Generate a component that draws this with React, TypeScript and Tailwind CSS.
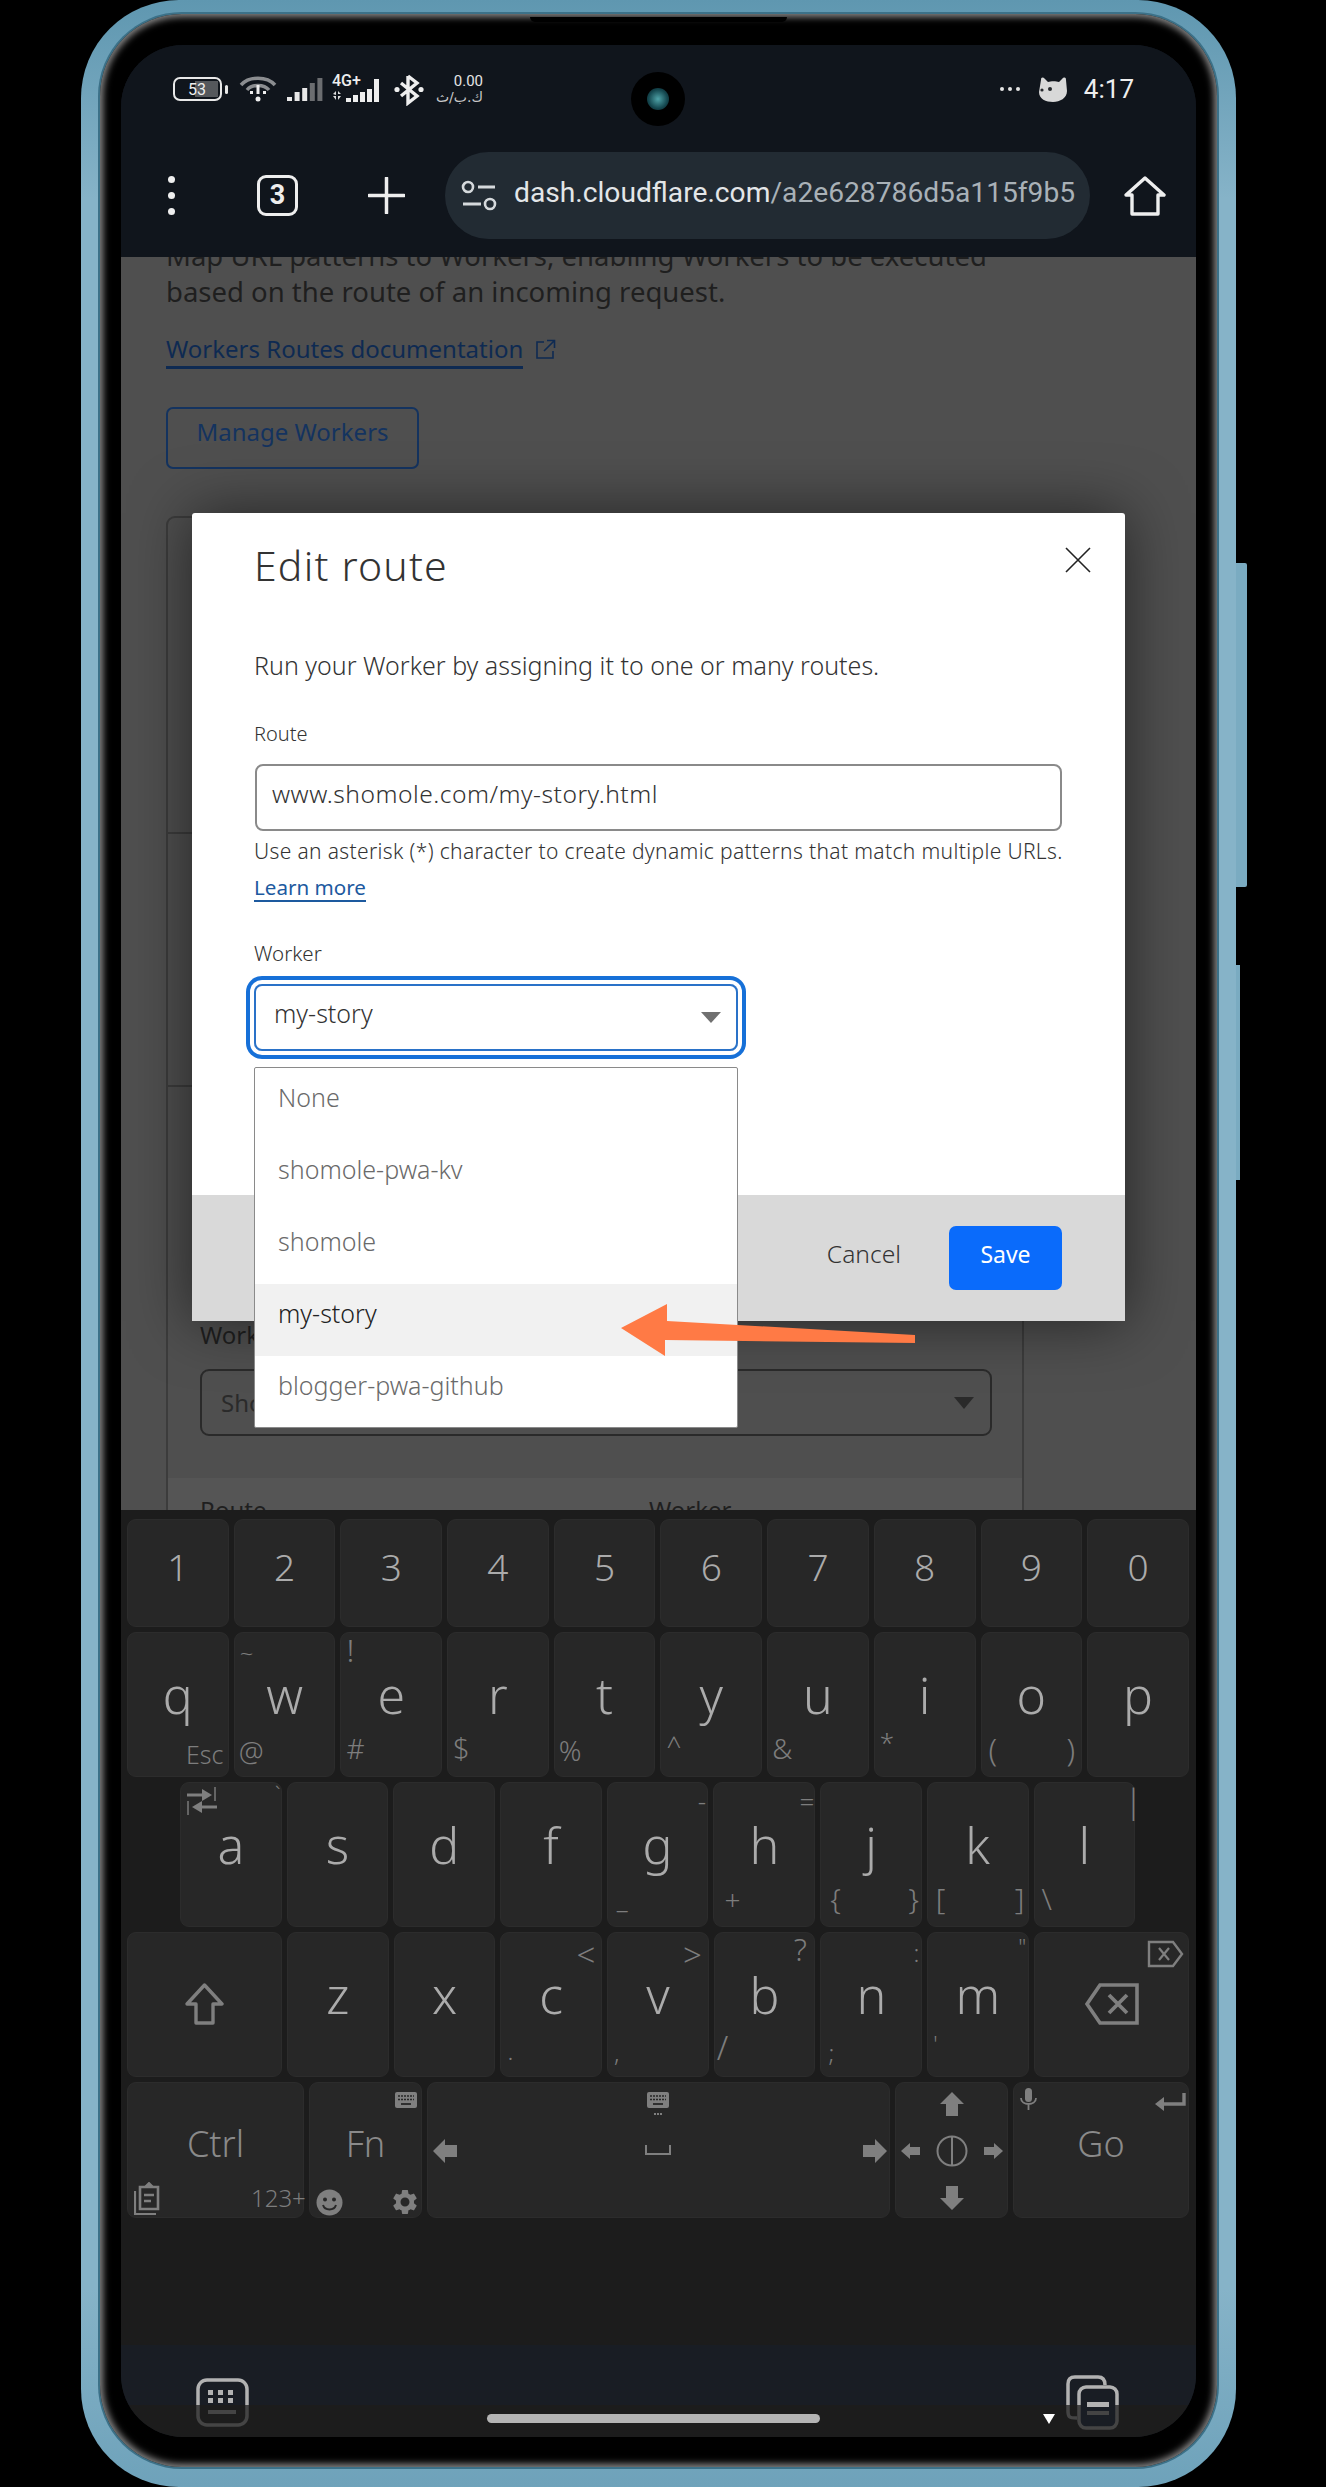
import React from 'react';

type HintT = { t: string; c: string };

function Hint({ t, c }: HintT) {
  return <span className={`absolute leading-none text-[#7d7d7d] font-light ${c}`}>{t}</span>;
}

function Key({
  label,
  w = 'w-[101.7px]',
  hints = [],
  children,
}: {
  label?: string;
  w?: string;
  hints?: HintT[];
  children?: React.ReactNode;
}) {
  return (
    <div className={`relative shrink-0 h-full bg-[#272727] border border-[#2c2c2c] rounded-[9px] flex justify-center ${w}`}>
      {label && <span className="text-[50px] leading-[66px] pt-[29px] text-[#ababab] font-light">{label}</span>}
      {hints.map((h, i) => (
        <Hint key={i} t={h.t} c={h.c} />
      ))}
      {children}
    </div>
  );
}

function Num({ n }: { n: string }) {
  return (
    <div className="shrink-0 h-full w-[101.7px] bg-[#272727] border border-[#2c2c2c] rounded-[9px] flex justify-center">
      <span className="text-[37px] leading-[50px] pt-[22px] text-[#ababab] font-light">{n}</span>
    </div>
  );
}

function Battery() {
  return (
    <svg width="56" height="24" viewBox="0 0 56 24">
      <rect x="1" y="1" width="47" height="22" rx="6" fill="none" stroke="#e8e8e8" strokeWidth="2" />
      <rect x="22" y="4" width="23" height="16" fill="#55585c" />
      <rect x="52" y="8" width="3" height="9" rx="1.5" fill="#e8e8e8" />
      <text x="24" y="18" textAnchor="middle" fontSize="16" fill="#eee" fontFamily="Roboto, sans-serif">53</text>
    </svg>
  );
}

function Wifi() {
  return (
    <svg width="38" height="26" viewBox="0 0 38 26" className="ml-[10px]">
      <path d="M2 9 C10 0 28 0 36 9" fill="none" stroke="#8b8d90" strokeWidth="3.5" />
      <path d="M8 14 C13 8 25 8 30 14" fill="none" stroke="#8b8d90" strokeWidth="3.5" />
      <rect x="17.5" y="9" width="3" height="9" fill="#eee" />
      <rect x="11" y="15" width="3" height="3" fill="#eee" />
      <rect x="24" y="15" width="3" height="3" fill="#eee" />
      <circle cx="19" cy="23" r="2.5" fill="#eee" />
    </svg>
  );
}

function Bars({ dim }: { dim: boolean }) {
  const hs = [4, 9, 13, 18, 23];
  return (
    <svg width="36" height="23" viewBox="0 0 36 23">
      {hs.map((h, i) => (
        <rect key={i} x={i * 7.6} y={23 - h} width="5" height={h} fill={dim && i > 2 ? '#6b6d70' : '#e8e8e8'} />
      ))}
    </svg>
  );
}

function StatusBar() {
  return (
    <div className="h-[88px] flex items-center pl-[52px] pr-[62px] font-['Roboto',sans-serif]">
      <Battery />
      <Wifi />
      <div className="ml-[10px] self-center mt-[1px]">
        <Bars dim />
      </div>
      <div className="ml-[9px] relative w-[50px] h-[26px]">
        <span className="absolute left-0 -top-[3px] text-[16px] leading-none text-[#eee] font-medium">4G+</span>
        <svg width="50" height="14" viewBox="0 0 50 14" className="absolute left-0 top-[12px] overflow-visible">
          <path d="M1 6 L4 3 V7 Z M1 8 L4 8 V12 Z M6 3 L9 6 H6 Z M6 8 H9 L6 12 Z" fill="#ddd" />
          <rect x="14" y="10" width="5" height="4" fill="#eee" />
          <rect x="21" y="7" width="5" height="7" fill="#eee" />
          <rect x="28" y="4" width="5" height="10" fill="#eee" />
          <rect x="35" y="1" width="5" height="13" fill="#eee" />
          <rect x="42" y="-9" width="5" height="23" fill="#eee" />
        </svg>
      </div>
      <svg width="30" height="33" viewBox="0 0 30 33" className="ml-[12px]">
        <path d="M14 3 V30 L23 23 L7 10 M14 3 L23 10 L7 23" fill="none" stroke="#eee" strokeWidth="3.4" />
        <circle cx="3" cy="16.5" r="2.6" fill="#eee" />
        <circle cx="27" cy="16.5" r="2.6" fill="#eee" />
      </svg>
      <div className="ml-[7px] w-[52px] flex flex-col items-end">
        <span className="text-[15px] leading-[15px] text-[#e4e4e4] mt-[1px]">0.00</span>
        <span dir="rtl" className="text-[14px] leading-[16px] text-[#c8c8c8] font-['DejaVu_Sans',sans-serif]">ك.ب/ث</span>
      </div>
      <div className="ml-auto flex items-center gap-[4px]">
        <span className="w-[4px] h-[4px] rounded-full bg-[#e4e4e4]" />
        <span className="w-[4px] h-[4px] rounded-full bg-[#e4e4e4]" />
        <span className="w-[4px] h-[4px] rounded-full bg-[#e4e4e4]" />
      </div>
      <svg width="30" height="26" viewBox="0 0 30 26" className="ml-[18px] mt-[2px]">
        <path d="M3 3 C3 0 5 0 7 2 L10 5 C13 4 18 4 21 5 L24 2 C26 0 28 0 28 3 L29 14 C29 21 22 25 15 25 C8 25 1 22 1 15 Z" fill="#d8d8d8" />
        <circle cx="12" cy="12" r="2" fill="#24272b" />
        <circle cx="4" cy="13" r="1.6" fill="#24272b" />
      </svg>
      <span className="ml-[16px] text-[26px] leading-none text-[#eee]">4:17</span>
    </div>
  );
}

function Toolbar() {
  return (
    <div className="pt-[19px] pb-[18px] flex items-center font-['Roboto',sans-serif]">
      <div className="ml-[47px] flex flex-col gap-[9px]">
        <span className="w-[7px] h-[7px] rounded-full bg-[#eee]" />
        <span className="w-[7px] h-[7px] rounded-full bg-[#eee]" />
        <span className="w-[7px] h-[7px] rounded-full bg-[#eee]" />
      </div>
      <div className="ml-[82px] w-[41px] h-[41px] rounded-[9px] border-[3.5px] border-[#eee] flex items-center justify-center text-[27px] font-bold text-[#eee] leading-none">
        3
      </div>
      <svg width="37" height="37" viewBox="0 0 37 37" className="ml-[70px]">
        <path d="M18.5 1 V36 M1 18.5 H36" stroke="#eee" strokeWidth="3.5" strokeLinecap="round" />
      </svg>
      <div className="ml-[40px] w-[645px] h-[87px] rounded-full bg-[#222b33] flex items-center pl-[16px] overflow-hidden">
        <svg width="36" height="32" viewBox="0 0 36 32" className="shrink-0">
          <circle cx="7" cy="7" r="5" fill="none" stroke="#d5d9dc" strokeWidth="2.6" />
          <path d="M17 7 H34 M2 24 H20" stroke="#d5d9dc" strokeWidth="2.8" />
          <circle cx="29" cy="24" r="5" fill="none" stroke="#d5d9dc" strokeWidth="2.6" />
        </svg>
        <span className="ml-[17px] -mt-[5px] text-[28.2px] leading-none whitespace-nowrap text-[#a9b1b7]">
          <span className="text-[#e3e6e8]">dash.cloudflare.com</span>/a2e628786d5a115f9b5
        </span>
      </div>
      <svg width="42" height="40" viewBox="0 0 42 40" className="ml-[34px]">
        <path d="M2 19 L21 2 L40 19 H34 V38 H8 V19 Z" fill="none" stroke="#eee" strokeWidth="3.4" strokeLinejoin="round" />
      </svg>
    </div>
  );
}

function PageBehind() {
  return (
    <div className="pl-[45px] -mt-[19px] text-[#1f1f1f]">
      <p className="text-[27.5px] leading-[36px] w-[870px]">
        Map URL patterns to Workers, enabling Workers to be executed based on the route of an incoming request.
      </p>
      <div className="mt-[22px] flex items-start">
        <span className="text-[24px] leading-[34px] text-[#0e2a52] border-b-[3px] border-[#0e2a52]">Workers Routes documentation</span>
        <svg width="21" height="21" viewBox="0 0 21 21" className="ml-[12px] mt-[7px]">
          <path d="M9 3 H2 V19 H18 V12 M12 1.5 H19.5 V9 M19 2 L9 12" fill="none" stroke="#0e2a52" strokeWidth="1.6" />
        </svg>
      </div>
      <div className="mt-[38px] w-[253px] h-[62px] rounded-[7px] border-2 border-[#14335f] text-[24px] leading-[46px] text-[#14335f] flex justify-center">
        Manage Workers
      </div>
      <div className="mt-[47px] w-[858px] rounded-t-[9px] border-x-2 border-t-2 border-[#3c3c3c]">
        <div className="h-[316px] border-b-2 border-[#3c3c3c]" />
        <div className="h-[253px] border-b-2 border-[#3c3c3c]" />
        <div className="h-[391px] px-[32px] pt-[232px]">
          <div className="text-[24px] leading-[32px] text-[#1f1f1f]">Worker</div>
          <div className="mt-[18px] h-[67px] w-[792px] rounded-[9px] border-2 border-[#2a2a2a] pl-[19px] pr-[16px] flex items-center justify-between">
            <span className="text-[24px] text-[#2a2a2a]">Shomole</span>
            <svg width="20" height="12" viewBox="0 0 20 12">
              <path d="M0 0 H20 L10 12 Z" fill="#2a2a2a" />
            </svg>
          </div>
        </div>
        <div className="h-[60px] bg-[#555555] pl-[32px] pt-[17px] flex text-[24px] leading-[30px] text-[#1f1f1f]">
          <span className="w-[449px]">Route</span>
          <span>Worker</span>
        </div>
      </div>
    </div>
  );
}

function Modal() {
  const items = ['None', 'shomole-pwa-kv', 'shomole', 'my-story', 'blogger-pwa-github'];
  return (
    <div className="absolute left-[71px] top-[256px] w-[933px] h-[808px] bg-white rounded-[3px] shadow-[0_0_60px_rgba(0,0,0,0.55)] flex flex-col text-[#333333]">
      <div className="relative h-[682px] pl-[62px] pr-[63px] pt-[28px]">
        <svg width="26" height="26" viewBox="0 0 26 26" className="absolute right-[34px] top-[34px]">
          <path d="M1 1 L25 25 M25 1 L1 25" stroke="#222" strokeWidth="1.6" />
        </svg>
        <h2 className="text-[41px] leading-[48px] font-light tracking-[1.2px]">Edit route</h2>
        <p className="mt-[60px] text-[25px] leading-[32px] font-light">Run your Worker by assigning it to one or many routes.</p>
        <label className="block mt-[40px] text-[20px] leading-[26px] font-light">Route</label>
        <div className="mt-[17px] ml-[1px] w-[807px] h-[67px] rounded-[8px] border-2 border-[#8a8a8a] flex items-center pl-[15px] text-[24.6px] font-light tracking-[0.5px] pb-[6px]">
          www.shomole.com/my-story.html
        </div>
        <p className="mt-[6px] text-[21px] leading-[28px] font-light tracking-[0.35px] whitespace-nowrap">
          Use an asterisk (*) character to create dynamic patterns that match multiple URLs.
        </p>
        <span className="inline-block mt-[9px] text-[20.6px] leading-[26px] text-[#1d5a9f] border-b-2 border-[#1d5a9f]">Learn more</span>
        <label className="block mt-[38px] text-[20.5px] leading-[26px] font-light">Worker</label>
        <div className="relative mt-[18px] w-[484px]">
          <div className="h-[67px] rounded-[8px] border-2 border-[#2a72c8] shadow-[0_0_0_4px_#ffffff,0_0_0_8px_#1670d8] flex items-center justify-between pl-[18px] pr-[15px]">
            <span className="text-[25px] font-light -mt-[8px]">my-story</span>
            <svg width="20" height="11" viewBox="0 0 20 11">
              <path d="M0 0 H20 L10 11 Z" fill="#707070" />
            </svg>
          </div>
          <div className="absolute left-0 top-[83px] w-[484px] h-[361px] bg-white border border-[#8a8a8a] rounded-[2px] z-10 flex flex-col">
            {items.map((it) => (
              <div
                key={it}
                className={`h-[72px] shrink-0 pl-[23px] pt-[9px] text-[25px] leading-[40px] font-light ${
                  it === 'my-story' ? 'bg-[#f1f1f1] text-[#222222]' : 'text-[#6a6a6a]'
                }`}
              >
                {it}
              </div>
            ))}
          </div>
        </div>
      </div>
      <div className="h-[126px] bg-[#d9d9d9] flex items-center justify-end pr-[63px]">
        <span className="text-[24.6px] font-light text-[#333] pb-[8px]">Cancel</span>
        <div className="ml-[48px] w-[113px] h-[64px] rounded-[7px] bg-[#0a6bfb] text-white text-[23px] flex items-center justify-center pb-[8px]">
          Save
        </div>
      </div>
    </div>
  );
}

function Arrow() {
  return (
    <svg width="294" height="52" viewBox="0 0 294 52" className="absolute left-[500px] top-[1047px] z-20">
      <path d="M0 24 L46 0 L46 17 L294 31 L294 39 L44 36 L44 52 Z" fill="#ff7a45" />
    </svg>
  );
}

const I = '#7f7f7f';

function Keyboard() {
  const r2 = [
    { l: 'q', h: [{ t: 'Esc', c: 'left-[58px] top-[109px] text-[25px]' }] },
    { l: 'w', h: [{ t: '~', c: 'left-[5px] top-[8px] text-[24px]' }, { t: '@', c: 'left-[4px] top-[104px] text-[28px]' }] },
    { l: 'e', h: [{ t: '!', c: 'left-[5px] top-[1px] text-[32px]' }, { t: '#', c: 'left-[5px] top-[101px] text-[28px]' }] },
    { l: 'r', h: [{ t: '$', c: 'left-[5px] top-[100px] text-[29px]' }] },
    { l: 't', h: [{ t: '%', c: 'left-[4px] top-[103px] text-[28px]' }] },
    { l: 'y', h: [{ t: '^', c: 'left-[5px] top-[99px] text-[26px]' }] },
    { l: 'u', h: [{ t: '&', c: 'left-[4px] top-[101px] text-[28px]' }] },
    { l: 'i', h: [{ t: '*', c: 'left-[5px] top-[96px] text-[26px]' }] },
    { l: 'o', h: [{ t: '(', c: 'left-[7px] top-[101px] text-[31px]' }, { t: ')', c: 'left-[85px] top-[101px] text-[31px]' }] },
    { l: 'p', h: [] },
  ];
  const r3 = [
    { l: 'a', h: [{ t: '`', c: 'left-[94px] top-[1px] text-[20px]' }] },
    { l: 's', h: [] },
    { l: 'd', h: [] },
    { l: 'f', h: [] },
    { l: 'g', h: [{ t: '-', c: 'left-[90px] top-[5px] text-[26px]' }, { t: '_', c: 'left-[9px] top-[103px] text-[26px]' }] },
    { l: 'h', h: [{ t: '=', c: 'left-[85px] top-[5px] text-[26px]' }, { t: '+', c: 'left-[10px] top-[102px] text-[28px]' }] },
    { l: 'j', h: [{ t: '{', c: 'left-[9px] top-[101px] text-[30px]' }, { t: '}', c: 'left-[87px] top-[101px] text-[30px]' }] },
    { l: 'k', h: [{ t: '[', c: 'left-[8px] top-[101px] text-[30px]' }, { t: ']', c: 'left-[87px] top-[101px] text-[30px]' }] },
    { l: 'l', h: [{ t: '|', c: 'left-[90px] top-[1px] text-[33px]' }, { t: '\\', c: 'left-[7px] top-[101px] text-[30px]' }] },
  ];
  const r4 = [
    { l: 'z', h: [] },
    { l: 'x', h: [] },
    { l: 'c', h: [{ t: '<', c: 'left-[75px] top-[5px] text-[33px]' }, { t: '.', c: 'left-[6px] top-[106px] text-[24px]' }] },
    { l: 'v', h: [{ t: '>', c: 'left-[75px] top-[5px] text-[33px]' }, { t: ',', c: 'left-[6px] top-[108px] text-[24px]' }] },
    { l: 'b', h: [{ t: '?', c: 'left-[79px] top-[1px] text-[31px]' }, { t: '/', c: 'left-[2px] top-[98px] text-[33px]' }] },
    { l: 'n', h: [{ t: ':', c: 'left-[92px] top-[8px] text-[24px]' }, { t: ';', c: 'left-[7px] top-[108px] text-[24px]' }] },
    { l: 'm', h: [{ t: '"', c: 'left-[90px] top-[2px] text-[22px]' }, { t: "'", c: 'left-[5px] top-[99px] text-[22px]' }] },
  ];
  return (
    <div className="h-[835px] bg-[#1c1c1c] pt-[9px] px-[6px] font-['Noto_Sans',sans-serif]">
      <div className="h-[108px] flex gap-[5px]">
        {['1', '2', '3', '4', '5', '6', '7', '8', '9', '0'].map((n) => (
          <Num key={n} n={n} />
        ))}
      </div>
      <div className="mt-[5px] h-[145px] flex gap-[5px]">
        {r2.map((k) => (
          <Key key={k.l} label={k.l} hints={k.h} />
        ))}
      </div>
      <div className="mt-[5px] h-[145px] pl-[53px] flex gap-[5px]">
        {r3.map((k) => (
          <Key key={k.l} label={k.l} hints={k.h}>
            {k.l === 'a' && (
              <svg width="30" height="28" viewBox="0 0 30 28" className="absolute left-[6px] top-[4px]">
                <path d="M0 8 H18" stroke={I} strokeWidth="3" />
                <path d="M15 2 L25 8 L15 14 Z" fill={I} />
                <path d="M30 20 H12" stroke={I} strokeWidth="3" />
                <path d="M15 14 L5 20 L15 26 Z" fill={I} />
                <path d="M28 0 V14 M1 14 V28" stroke={I} strokeWidth="1.4" />
              </svg>
            )}
          </Key>
        ))}
      </div>
      <div className="mt-[5px] h-[145px] flex gap-[5px]">
        <Key w="w-[155px]">
          <svg width="39" height="42" viewBox="0 0 39 42" className="absolute left-[57px] top-[50px]">
            <path d="M19.5 2 L37 21 H28 V40 H11 V21 H2 Z" fill="none" stroke={I} strokeWidth="3.4" strokeLinejoin="round" />
          </svg>
        </Key>
        {r4.map((k) => (
          <Key key={k.l} label={k.l} hints={k.h} />
        ))}
        <Key w="w-[155px]">
          <svg width="37" height="28" viewBox="0 0 37 28" className="absolute left-[112px] top-[7px]">
            <path d="M2 2 H26 L35 14 L26 26 H2 Z" fill="none" stroke={I} strokeWidth="2.4" />
            <path d="M12 8 L22 20 M22 8 L12 20" stroke={I} strokeWidth="2.2" />
          </svg>
          <svg width="54" height="42" viewBox="0 0 54 42" className="absolute left-[50px] top-[50px]">
            <path d="M52 2 H15 L2 21 L15 40 H52 Z" fill="none" stroke={I} strokeWidth="3.6" />
            <path d="M24 12 L42 30 M42 12 L24 30" stroke={I} strokeWidth="3.8" />
          </svg>
        </Key>
      </div>
      <div className="mt-[5px] h-[136px] flex gap-[5px]">
        <Key w="w-[177px]">
          <span className="text-[36px] leading-[46px] pt-[38px] text-[#8a8a8a] font-light">Ctrl</span>
          <svg width="30" height="33" viewBox="0 0 30 33" className="absolute left-[6px] top-[99px]">
            <path d="M6 5 H24 V27 H6 Z" fill="none" stroke={I} strokeWidth="2.6" />
            <path d="M1 9 V32 H22" fill="none" stroke={I} strokeWidth="2.2" />
            <path d="M11 5 L15 1 L19 5 Z" fill={I} stroke={I} strokeWidth="2" />
            <path d="M10 13 H20 M10 19 H17" stroke={I} strokeWidth="2.4" />
          </svg>
          <span className="absolute left-[123px] top-[103px] text-[24px] leading-none text-[#7d7d7d] font-light">123+</span>
        </Key>
        <Key w="w-[113px]">
          <span className="text-[36px] leading-[46px] pt-[38px] text-[#8a8a8a] font-light">Fn</span>
          <svg width="22" height="16" viewBox="0 0 22 16" className="absolute left-[85px] top-[9px]">
            <rect width="22" height="16" rx="2" fill={I} />
            <path d="M3 4 H19 M3 7.5 H19" stroke="#272727" strokeWidth="1.5" strokeDasharray="2 1" />
            <path d="M6 12 H16" stroke="#272727" strokeWidth="1.8" />
          </svg>
          <svg width="27" height="27" viewBox="0 0 27 27" className="absolute left-[6px] top-[106px]">
            <circle cx="13.5" cy="13.5" r="13" fill={I} />
            <circle cx="9" cy="10.5" r="2" fill="#272727" />
            <circle cx="18" cy="10.5" r="2" fill="#272727" />
            <path d="M7 16 C9 22 18 22 20 16" fill="none" stroke="#272727" strokeWidth="2" />
          </svg>
          <svg width="30" height="30" viewBox="0 0 24 24" className="absolute left-[80px] top-[104px]">
            <path
              fill={I}
              d="M19.14 12.94c.04-.3.06-.61.06-.94 0-.32-.02-.64-.07-.94l2.03-1.58a.49.49 0 0 0 .12-.61l-1.92-3.32a.49.49 0 0 0-.59-.22l-2.39.96c-.5-.38-1.03-.7-1.62-.94l-.36-2.54a.48.48 0 0 0-.48-.41h-3.84c-.24 0-.43.17-.47.41l-.36 2.54c-.59.24-1.13.57-1.62.94l-2.39-.96a.48.48 0 0 0-.59.22L2.74 8.87a.48.48 0 0 0 .12.61l2.03 1.58c-.05.3-.09.63-.09.94s.02.64.07.94l-2.03 1.58a.49.49 0 0 0-.12.61l1.92 3.32c.12.22.37.29.59.22l2.39-.96c.5.38 1.03.7 1.62.94l.36 2.54c.05.24.24.41.48.41h3.84c.24 0 .44-.17.47-.41l.36-2.54c.59-.24 1.13-.56 1.62-.94l2.39.96c.22.08.47 0 .59-.22l1.92-3.32a.48.48 0 0 0-.12-.61l-2.01-1.58zM12 15.6A3.6 3.6 0 1 1 12 8.4a3.6 3.6 0 0 1 0 7.2z"
            />
          </svg>
        </Key>
        <Key w="w-[463px]">
          <svg width="22" height="24" viewBox="0 0 22 24" className="absolute left-[219px] top-[9px]">
            <rect width="22" height="16" rx="2" fill={I} />
            <path d="M3 4 H19 M3 7.5 H19" stroke="#272727" strokeWidth="1.5" strokeDasharray="2 1" />
            <path d="M6 12 H16" stroke="#272727" strokeWidth="1.8" />
            <path d="M7 22 H15" stroke={I} strokeWidth="2" strokeDasharray="2 1" />
          </svg>
          <svg width="26" height="10" viewBox="0 0 26 10" className="absolute left-[217px] top-[62px]">
            <path d="M1 0 V9 H25 V0" fill="none" stroke={I} strokeWidth="2" />
          </svg>
          <svg width="24" height="24" viewBox="0 0 24 24" className="absolute left-[5px] top-[56px]">
            <path d="M0 12 L12 0 V6 H24 V18 H12 V24 Z" fill={I} />
          </svg>
          <svg width="24" height="24" viewBox="0 0 24 24" className="absolute left-[435px] top-[56px]">
            <path d="M24 12 L12 0 V6 H0 V18 H12 V24 Z" fill={I} />
          </svg>
        </Key>
        <Key w="w-[113px]">
          <svg width="24" height="24" viewBox="0 0 24 24" className="absolute left-[44px] top-[9px]">
            <path d="M12 0 L24 12 H18 V24 H6 V12 H0 Z" fill={I} />
          </svg>
          <svg width="24" height="24" viewBox="0 0 24 24" className="absolute left-[44px] top-[103px]">
            <path d="M12 24 L24 12 H18 V0 H6 V12 H0 Z" fill={I} />
          </svg>
          <svg width="19" height="16" viewBox="0 0 19 16" className="absolute left-[5px] top-[60px]">
            <path d="M0 8 L9 0 V4 H19 V12 H9 V16 Z" fill={I} />
          </svg>
          <svg width="19" height="16" viewBox="0 0 19 16" className="absolute left-[88px] top-[60px]">
            <path d="M19 8 L10 0 V4 H0 V12 H10 V16 Z" fill={I} />
          </svg>
          <svg width="32" height="32" viewBox="0 0 32 32" className="absolute left-[40px] top-[52px]">
            <circle cx="16" cy="16" r="14.5" fill="none" stroke={I} strokeWidth="2" />
            <path d="M16 2 V30" stroke={I} strokeWidth="2" />
          </svg>
        </Key>
        <Key w="w-[176px]">
          <span className="text-[36px] leading-[46px] pt-[38px] text-[#8a8a8a] font-light">Go</span>
          <svg width="17" height="22" viewBox="0 0 17 22" className="absolute left-[6px] top-[5px]">
            <rect x="5" y="0" width="7" height="14" rx="3.5" fill={I} />
            <path d="M1 10 C1 18 16 18 16 10 M8.5 16 V22" fill="none" stroke={I} strokeWidth="1.8" />
          </svg>
          <svg width="31" height="18" viewBox="0 0 31 18" className="absolute left-[141px] top-[10px]">
            <path d="M29 0 V11 H7" fill="none" stroke={I} strokeWidth="3.4" />
            <path d="M0 11 L9 4 V18 Z" fill={I} />
          </svg>
        </Key>
      </div>
    </div>
  );
}

function NavBar() {
  const grad = (id: string, split: number) => (
    <linearGradient id={id} x1="0" y1="0" x2="0" y2="60" gradientUnits="userSpaceOnUse">
      <stop offset={split} stopColor="#b2b2b2" />
      <stop offset={split} stopColor="#444444" />
    </linearGradient>
  );
  return (
    <div className="h-[92px] bg-[linear-gradient(to_bottom,#191d24_0,#191d24_60px,#1c1c1c_60px)] flex pl-[75px]">
      <svg width="53" height="50" viewBox="0 0 53 50" className="mt-[33px] shrink-0">
        <defs>{grad('kb', 0.45)}</defs>
        <rect x="2" y="2" width="49" height="45" rx="9" fill="none" stroke="url(#kb)" strokeWidth="3.5" />
        {[14, 24, 34].map((x) =>
          [12, 20].map((y) => <rect key={`${x}-${y}`} x={x - 2} y={y} width="5" height="5" fill="#b2b2b2" />),
        )}
        <rect x="12" y="32" width="28" height="4" fill="#444" />
      </svg>
      <div className="ml-[238px] mt-[69px] w-[333px] h-[9px] rounded-full bg-[#b4b4b4] shrink-0" />
      <svg width="12" height="10" viewBox="0 0 12 10" className="ml-[223px] mt-[69px] shrink-0">
        <path d="M0 0 H12 L6 10 Z" fill="#fff" />
      </svg>
      <svg width="53" height="55" viewBox="0 0 53 55" className="ml-[11px] mt-[30px] shrink-0">
        <defs>{grad('mw', 0.5)}</defs>
        <path d="M11 43 C3 43 2 42 2 36 V9 C2 4 5 2 9 2 H32 C37 2 39 5 39 10" fill="none" stroke="url(#mw)" strokeWidth="3.5" />
        <rect x="13" y="12" width="38" height="41" rx="7" fill="#191d24" stroke="url(#mw)" strokeWidth="3.5" />
        <rect x="21" y="27" width="22" height="5" fill="#b2b2b2" />
        <rect x="21" y="36" width="22" height="4" fill="#444" />
      </svg>
    </div>
  );
}

export default function App() {
  return (
    <div className="relative w-[1326px] h-[2487px] bg-black overflow-hidden font-['Noto_Sans',sans-serif]">
      <div className="relative ml-[81px] w-[1155px] h-[2487px] rounded-[98px] bg-[linear-gradient(180deg,#5f97b0,#86b3c8_8%,#86b3c8_92%,#6ea2ba)] pt-[14px] px-[19px] pb-[20px]">
        <div className="h-full rounded-[82px] bg-black px-[21px] pt-[31px] pb-[30px] shadow-[0_0_0_2px_#3c7188,inset_0_0_7px_3px_#8a8a8a]">
          <div className="relative h-full rounded-[62px] overflow-hidden flex flex-col bg-[#10151c]">
            <div className="h-[212px] shrink-0 bg-[#10151c]">
              <StatusBar />
              <Toolbar />
            </div>
            <div className="absolute left-[510px] top-[27px] w-[54px] h-[54px] rounded-full bg-black flex items-center justify-center z-30">
              <div className="w-[22px] h-[22px] rounded-full bg-[radial-gradient(circle,#4fa3a8,#14474f_60%,#0a1a20)]" />
            </div>
            <div className="relative h-[1253px] shrink-0 bg-[#4f4f4f] overflow-hidden">
              <PageBehind />
              <Modal />
              <Arrow />
            </div>
            <Keyboard />
            <NavBar />
          </div>
        </div>
        <div className="absolute left-[449px] top-[17px] w-[257px] h-[5px] rounded-b-[6px] bg-black" />
        <div className="absolute -right-[11px] top-[563px] w-[11px] h-[324px] bg-[#7aabc1] rounded-r-[2px]" />
        <div className="absolute -right-[4px] top-[965px] w-[4px] h-[215px] bg-[#7aabc1]" />
      </div>
    </div>
  );
}
